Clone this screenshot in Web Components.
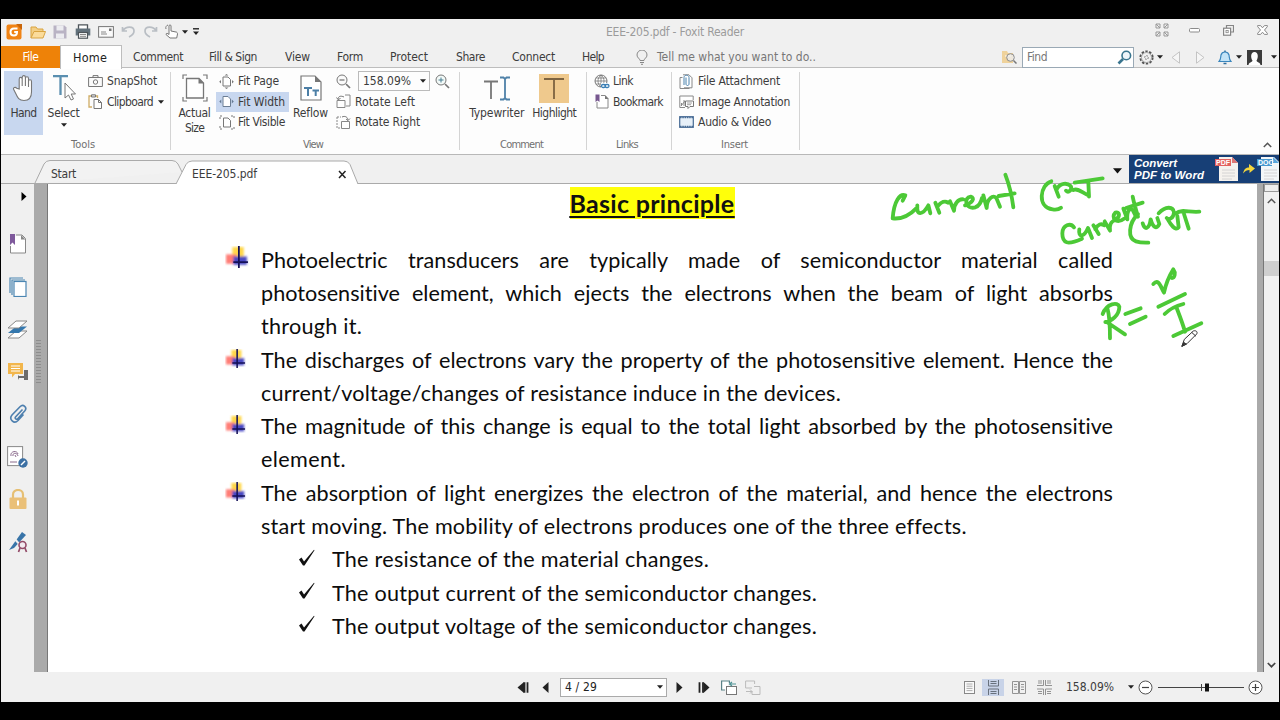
<!DOCTYPE html>
<html lang="en"><head><meta charset="utf-8"><title>EEE-205.pdf - Foxit Reader</title>
<style>
html,body{margin:0;height:100%;overflow:hidden;background:#000}
body{font-family:"DejaVu Sans Condensed","Noto Sans",sans-serif;font-size:12px;color:#3c3c3c}
</style></head><body><fx-app></fx-app>
<script>
const ICONS={
logo:[16,16,'<rect x=".5" y=".5" width="15" height="15" rx="2" fill="#f08314"/><path d="M10 0h6v6z" fill="#c9660a"/><path d="M11.5 4.5H8C5.5 4.5 4.5 6 4.500 8s1.300 3.500 3.500 3.500S11 10 11 8H8.200" fill="none" stroke="#fff" stroke-width="2"/>'],
folder:[16,14,'<path d="M1 13V2h5l1.500 2H13v3" fill="#f3cf86" stroke="#d9a441"/><path d="M1 13 4 6.500h11.500L13 13z" fill="#fbdc9b" stroke="#d9a441"/>'],
save:[14,14,'<path d="M.5.5h11l2 2v11H.5z" fill="#b9b3c4"/><path d="M3.500.5h7v5h-7zM3 8.500h8v5H3z" fill="#ececf0"/>'],
print:[16,15,'<path d="M3.500 5V.8h9V5" fill="#fff" stroke="#4d5459" stroke-width="1.300"/><rect x=".7" y="4.500" width="14.600" height="7" fill="#62717b"/><rect x="3.500" y="8.500" width="9" height="5.700" fill="#fff" stroke="#4d5459" stroke-width="1.200"/><path d="M5 10.500h6M5 12.300h6" stroke="#888"/>'],
mail:[16,12,'<rect x=".6" y=".6" width="14.800" height="10.600" fill="#fafafa" stroke="#777"/><path d="M3 6h5M3 8h6" stroke="#888"/><rect x="11" y="2.500" width="2.500" height="2.500" fill="#777"/>'],
undo:[15,13,'<path d="M1.500 2v4h4.500M2 5.500C5 1 13 1 13 6c0 3-3 5-5 6" fill="none" stroke="#b9bec4" stroke-width="1.700"/>'],
redo:[15,13,'<path d="M13.500 2v4H9M13 5.500C10 1 2 1 2 6c0 3 3 5 5 6" fill="none" stroke="#b9bec4" stroke-width="1.700"/>'],
touch:[14,15,'<path d="M4 10V2c0-1.500 2-1.500 2 0v5l5 1c1 0 1.500 1 1.500 2l-.8 4H5L1 10.500c0-1.500 1.500-1.500 3 0zM1 5a3 3 0 0 1 2-4" fill="#fff" stroke="#777"/>'],
down:[6,4,'<path d="M0 .3h6L3 3.700z" fill="#222"/>'],
downbig:[9,6,'<path d="M0 .3h9L4.500 5.500z" fill="#111"/>'],
custom:[6,8,'<path d="M0 .8h6" stroke="#222" stroke-width="1.400"/><path d="M0 3.500h6L3 7z" fill="#222"/>'],
full:[14,14,'<g fill="none" stroke="#999" stroke-width="1"><path d="M1 1h4v4H1zM9 1h4v4H9zM1 9h4v4H1zM9 9h4v4H9zM1 1l4 4M13 1 9 5M1 13l4-4M13 13 9 9"/></g>'],
min:[11,5,'<rect x=".5" y=".5" width="10" height="3.500" rx="1" fill="#fff" stroke="#8b8b8b"/>'],
restore:[11,11,'<path d="M3.500 3V.5h7v6.500H8" fill="none" stroke="#858585" stroke-width="1.200"/><rect x=".6" y="3.200" width="7" height="7" fill="#fff" stroke="#858585" stroke-width="1.200"/><rect x="3" y="5.500" width="2.200" height="2.200" fill="none" stroke="#858585" stroke-width=".8"/>'],
close:[11,10,'<path d="M.6.6h3L5.500 2.800 7.400.6h3v1L7.500 5l2.900 3.400v1h-3L5.500 7.200 3.600 9.400h-3v-1L3.500 5 .6 1.600z" fill="#fff" stroke="#888"/>'],
bulb:[12,15,'<path d="M4 10.500C4 8.500 1 8 1 5a5 5 0 0 1 10 0c0 3-3 3.500-3 5.500zM4 12.500h4M5 14.300h2" fill="none" stroke="#888"/>'],
fsearch:[16,14,'<path d="M1 13V1h5l1 2h5v10z" fill="#efd29b"/><path d="M4 6h6" stroke="#fff"/><circle cx="9.500" cy="7.500" r="3.800" fill="#eee" fill-opacity=".8" stroke="#8c8c8c"/><path d="m12.500 10.500 3 3" stroke="#777" stroke-width="1.500"/>'],
find:[15,15,'<circle cx="9.300" cy="5.500" r="4.300" fill="#edf5fa" stroke="#39758f" stroke-width="1.600"/><path d="M6 9 1.500 13.500" stroke="#39758f" stroke-width="2.600"/>'],
gear:[15,15,'<circle cx="7.500" cy="7.500" r="6.200" fill="none" stroke="#555" stroke-width="1.800" stroke-dasharray="2.400 1.500"/><circle cx="7.500" cy="7.500" r="5" fill="#f0f0f0" stroke="#777" stroke-width=".6"/><circle cx="7.500" cy="7.500" r="1.800" fill="none" stroke="#666" stroke-dasharray="1.500 1"/>'],
tl:[9,13,'<path d="M8.500.8v11.400L1 6.500z" fill="#f6f6f6" stroke="#c4c4c4"/>'],
tr:[9,13,'<path d="M.5.8v11.400L8 6.500z" fill="#f6f6f6" stroke="#c4c4c4"/>'],
bell:[14,15,'<path d="M1 11.500c2-2 1.500-4 2-6.500.5-2 2-3 4-3s3.500 1 4 3c.5 2.500 0 4.500 2 6.500z" fill="#c2e3f7" stroke="#3a86bd" stroke-width="1.200"/><path d="M7 2V.5M5.500 13.500h3" stroke="#2f6f9f" stroke-width="1.500"/>'],
avatar:[15,15,'<rect width="15" height="15" fill="#3b3b3b"/><path d="M1.500 15c.5-3 3.500-2.500 4-4.500C3.500 8 3.500 2 7.500 2s4 6 2 8.500c.5 2 3.500 1.500 4 4.500z" fill="#fff"/>'],
hand:[24,28,'<path d="M7.200 15V5.200c0-2.400 3-2.400 3 0V12 3.500c0-2.500 3.200-2.500 3.200 0V12 4.500c0-2.300 3.100-2.300 3.100 0V13 7.500c0-2.300 3-2.300 3 0V18c0 5-2 8.500-7.500 8.500-5 0-6.500-3-8-6.500L1.700 15.500c-1-2 1.800-3 3-1.200z" fill="#fff" stroke="#777" stroke-width="1.100"/>'],
select:[24,28,'<path d="M1 2.200h15M8.500 2v19" stroke="#5a8fb0" stroke-width="2.300"/><path d="M13 9v15l3.500-3 2.500 5 2.500-1-2.300-5H23.500z" fill="#fff" stroke="#777"/>'],
camera:[15,12,'<path d="M.6 2.500h13.800v9H.6zM5 2.500V.6h5v1.900" fill="#fafafa" stroke="#777"/><circle cx="7.500" cy="7" r="2.200" fill="none" stroke="#777"/>'],
clip:[15,15,'<path d="M4 2H1v11h3M9.500 4V2H8" fill="none" stroke="#d0ad65" stroke-width="1.300"/><path d="M3.500 3V.8h4V3z" fill="#ddd" stroke="#777"/><path d="M6 5.500h4.500l3 3v6H6zM10.500 5.500v3h3" fill="#fff" stroke="#777"/>'],
actual:[26,28,'<path d="M1 5V1h4M21 1h4v4M1 23v4h4M21 27h4v-4" fill="none" stroke="#777" stroke-width="1.200"/><path d="M4.500 4.500h12.500l4.500 4.500v15h-17z" fill="#fff" stroke="#777" stroke-width="1.300"/><path d="M16.500 4v5.500H22z" fill="#777"/>'],
fitpage:[15,15,'<path d="M4 3h5l2.500 2.500V12H4z" fill="#fff" stroke="#777"/><path d="M5.500 1.500 7.500 0l2 1.500zM5.500 13.500l2 1.500 2-1.500zM2 6 .2 7.800 2 9.500zM13 6l1.800 1.800L13 9.500z" fill="#777"/>'],
fitwidth:[15,13,'<path d="M4 1.500h5L11.500 4v7.500H4z" fill="#fff" stroke="#6c7e94"/><path d="M2.300 4.500.3 6.500l2 2zM12.800 4.500l2 2-2 2z" fill="#657992"/>'],
fitvis:[16,15,'<path d="M4.500 3H9l2.500 2.500V12h-7z" fill="#fff" stroke="#777"/><path d="M1 4V1h3M12 1h3v3M1 11v3h3M12 14h3v-3" fill="none" stroke="#777" stroke-dasharray="2 1"/>'],
reflow:[22,26,'<path d="M1 1h14l6 6v18H1z" fill="#fff" stroke="#777" stroke-width="1.200"/><path d="M15 1v6h6z" fill="#777"/><path d="M4 13h8M8 13v8M12.500 15.500h6.500M15.700 15.500V21" stroke="#4c7fa6" stroke-width="2"/>'],
zin:[15,15,'<circle cx="6" cy="6" r="5" fill="#f3faf8" stroke="#777"/><path d="m10 10 4 4" stroke="#777" stroke-width="1.700"/><path d="M3.500 6h5M6 3.500v5" stroke="#477c91"/>'],
zout:[15,15,'<circle cx="6" cy="6" r="5" fill="#fafafa" stroke="#777"/><path d="m10 10 4 4" stroke="#777" stroke-width="1.700"/><path d="M3.500 6h5" stroke="#555"/>'],
rotl:[15,15,'<path d="M9 1h5v11h-4" fill="none" stroke="#888"/><path d="M1 6.500h8v7H1z" fill="#fff" stroke="#888"/><path d="M2 5.500C2 2 5 1.500 8 3M2 5.500.5 3.500M2 5.500l2.500-1" fill="none" stroke="#777"/>'],
rotr:[15,15,'<path d="M1 2v11h3M1 2h4" fill="none" stroke="#888" stroke-dasharray="2 1"/><path d="M5.500 6.500h8v7h-8z" fill="#fff" stroke="#888"/><path d="M6 2c3-1.500 6 0 6 3.500M12 5.500 10 4M12 5.500 14 3.500" fill="none" stroke="#777"/>'],
type:[28,25,'<path d="M1 5.500h14M8 5.500V23" stroke="#777" stroke-width="1.800"/><path d="M17 1.500h3.500L22 3l1.500-1.500H27M17 23.500h3.500L22 22l1.500 1.500H27M22 3v19" fill="none" stroke="#4f81a8" stroke-width="1.800"/>'],
high:[30,29,'<rect width="30" height="29" fill="#efc98d"/><path d="M5 5h20M15 5v20" stroke="#7d6340" stroke-width="1.800"/>'],
link:[16,15,'<circle cx="7" cy="7" r="6" fill="#fff" stroke="#777"/><path d="M1 7h12M7 1v12M2 4h10M2 10h9M7 1C3 4 3 10 7 13M7 1c4 3 4 9 0 12" fill="none" stroke="#777" stroke-width=".8"/><path d="M7 9h9v6H7z" fill="#fff"/><rect x="7.500" y="10.500" width="4" height="3" rx="1.500" fill="none" stroke="#3b7fb5" stroke-width="1.300"/><rect x="11" y="10.500" width="4" height="3" rx="1.500" fill="none" stroke="#3b7fb5" stroke-width="1.300"/>'],
bm:[15,15,'<path d="M7 1.500h4l3 3V14H3V8" fill="#fff" stroke="#888"/><path d="M11 1v4h3.500z" fill="#777"/><path d="M1.500.5h4V8l-2-1.500-2 1.500z" fill="#77588f"/>'],
attach:[14,15,'<path d="M3.500 3.500H1v11h9.500" fill="none" stroke="#888"/><path d="M4 .8h6l3 3v10H5" fill="#fff" stroke="#888"/><path d="M7 3.500v6.500c0 2 3 2 3 0V3.500c0-3-5-3-5 0V11" fill="none" stroke="#4b83ae"/>'],
imgann:[15,14,'<path d="M6 12.500H.8V1h13.400v4" fill="#fff" stroke="#888"/><path d="M2.500 11V8M5 11V5M2 11l4-5" stroke="#888"/><path d="M6.500 6h8v5.500H11L9 13.500v-2H6.500z" fill="#fff" stroke="#777"/><path d="M8 8h5M8 9.700h4" stroke="#888" stroke-width=".8"/>'],
video:[15,12,'<rect x=".7" y=".7" width="13.600" height="10.600" fill="#e7f0f8" stroke="#476b94" stroke-width="1.200"/><path d="M1 1.500h13M1 10.500h13" stroke="#476b94" stroke-width="1.600" stroke-dasharray="1.500 .8"/>'],
up:[9,6,'<path d="M.8 5 4.500 1.300 8.200 5" fill="none" stroke="#555" stroke-width="1.500"/>'],
dn:[9,6,'<path d="M.8 1 4.500 4.700 8.200 1" fill="none" stroke="#444" stroke-width="1.700"/>'],
x:[9,9,'<path d="m1 1 6.500 7M7.500 1 1 8" stroke="#222" stroke-width="1.500"/>'],
play:[6,9,'<path d="M.5 0v9L5.500 4.500z" fill="#000"/>'],
sbm:[16,20,'<path d="M6 1h6l3.500 3.500V19H.5V12" fill="#fff" stroke="#888"/><path d="M11 1v4.500h4.500z" fill="#888"/><path d="M0 0h5v11L2.500 8.500 0 11z" fill="#7f5a9c"/>'],
pages:[18,20,'<path d="M1 16V1h13M3 18V3h13" fill="none" stroke="#4b86b2" stroke-width="1.200"/><rect x="5" y="4.500" width="12" height="15" fill="#fff" stroke="#4b86b2" stroke-width="1.200"/>'],
layers:[21,19,'<path d="M1 18h11l8-7H9z" fill="#fff" stroke="#888"/><path d="M1 13h11l8-6.500H9z" fill="#3477ad"/><path d="M1 8h11l8-7H9z" fill="#fff" stroke="#888"/>'],
comm:[20,20,'<path d="M0 1h15v11H7l-3 3.500V12H0z" fill="#f2b64c"/><path d="M3 4h9M3 6.500h9M3 9h9" stroke="#fff"/><path d="M16 8h4v10h-4v-2h-5l-1 2v-5l1 1h5z" fill="#6c6c6c"/>'],
pclip:[18,20,'<path d="M13.500 5.500 6.500 13c-1 1.500 1 3 2.200 1.700l7-7.700c3-3.500-1.500-7.500-4.700-4.200L3 11c-3.500 4.200 2 9.500 6 5.500l5.500-6" fill="none" stroke="#4d7fae" stroke-width="1.600"/>'],
sign:[21,22,'<rect x=".6" y=".6" width="15" height="19" fill="#fff" stroke="#888"/><path d="M4 10c-1-5 6-6 7-2M6 10c-1-3 4-4 5 0M8 9l1 2M3 16h7" fill="none" stroke="#8a6a8c"/><circle cx="16" cy="17" r="4.700" fill="#3c70a4"/><path d="m14 19 4-4" stroke="#fff" stroke-width="1.500"/>'],
lock:[18,20,'<path d="M4 9V5.500c0-6 10-6 10 0V9" fill="none" stroke="#e6bf73" stroke-width="2.200"/><rect x=".5" y="8.500" width="17" height="11.500" rx="1" fill="#eac078"/><path d="M9 11.500v5" stroke="#fff" stroke-width="2"/>'],
pen:[20,22,'<path d="M1 19 14 1l4 3L6 17z" fill="#3874a8"/><path d="m6 7 6 7" stroke="#f0f0f0" stroke-width="2"/><circle cx="14.500" cy="14" r="3.500" fill="#f2eaf0" stroke="#934b68" stroke-width="1.600"/><path d="m12 17-1.500 4M17 17l1.500 4" stroke="#934b68" stroke-width="1.700"/>'],
first:[12,11,'<path d="M7 0v11L.5 5.500z" fill="#222"/><path d="M7.500.3v10.400M10.500.3v10.400" stroke="#222" stroke-width="1.800"/>'],
prev:[7,11,'<path d="M6.500 0v11L.5 5.500z" fill="#222"/>'],
next:[7,11,'<path d="M.5 0v11l6-5.500z" fill="#222"/>'],
last:[12,11,'<path d="M5.500 0v11l6-5.500z" fill="#222"/><path d="M1.500.3v10.400M5 .3v10.400" stroke="#222" stroke-width="1.800"/>'],
vb:[16,15,'<path d="M4 10H.6V1h7.800v2" fill="#fff" stroke="#5b8388" stroke-width="1.200"/><rect x="5.500" y="6.500" width="10" height="8" fill="#fff" stroke="#777"/><path d="M15 4H9M11 2 8.500 4 11 6" fill="none" stroke="#4d9395" stroke-width="1.200"/>'],
vf:[16,15,'<path d="M7 8H.6V1h9v3" fill="none" stroke="#bbb"/><path d="M9 6.500h6v8H7V11M1 11.500h6M5 9.500l2 2-2 2" fill="none" stroke="#bbb"/>'],
p1:[11,13,'<rect x=".5" y=".5" width="10" height="12" fill="#fafafa" stroke="#888"/><path d="M2.500 3h6M2.500 5.200h6M2.500 7.400h6M2.500 9.600h6" stroke="#999" stroke-width=".8"/>'],
p2:[11,15,'<path d="M.5 0v6h10V0M.5 15V9h10v6M2.500 1.500h6M2.500 3.500h6M2.500 11.500h6M2.500 13.500h6" fill="none" stroke="#68717d"/>'],
p3:[14,13,'<path d="M.5.5h6v12h-6zM7.500.5h6v12h-6zM2 3.500h3M2 6h3M2 8.500h3M9 3.500h3M9 6h3M9 8.500h3" fill="none" stroke="#888" stroke-width=".9"/>'],
p4:[15,15,'<path d="M0 5.500h6.500V0M15 5.500H8.500V0M0 9h6.500v6M15 9H8.500v6M1 1h4M1 3h4M10 1h4M10 3h4M1 11.500h4M1 13.500h4M10 11.500h4M10 13.500h4" fill="none" stroke="#888" stroke-width=".9"/>'],
zm:[15,15,'<circle cx="7.500" cy="7.500" r="6.500" fill="#fff" stroke="#555"/><path d="M4 7.500h7" stroke="#444" stroke-width="1.200"/>'],
zp:[15,15,'<circle cx="7.500" cy="7.500" r="6.500" fill="#fff" stroke="#555"/><path d="M4 7.500h7M7.500 4v7" stroke="#444" stroke-width="1.200"/>'],
slider:[86,10,'<path d="M0 5.500h86" stroke="#444" stroke-width="1.200"/><path d="M43.500 2v7" stroke="#444"/><rect x="47" y="1.500" width="4" height="8" fill="#111"/>'],
pdf:[24,25,'<path d="M4 1h13l6 6v18H4z" fill="#f5f2ee"/><path d="M17 1v6h6z" fill="#dd7776"/><path d="M7 14h13M7 17h13M7 20h13M7 23h10" stroke="#ccc" stroke-width=".8"/><rect y="3" width="16" height="7" fill="#e2605e"/>'],
doc:[22,25,'<path d="M4 1h13l6 6v18H4z" fill="#f3f6f8"/><path d="M16 1v6h6z" fill="#5aa7dc"/><path d="M7 14h13M7 17h13M7 20h13M7 23h10" stroke="#ccc" stroke-width=".8"/><rect y="3" width="15" height="7" fill="#4798cf"/>'],
arrow:[12,10,'<path d="M0 9.500C1 5 3 3.500 6 3.500V0l6 4.500L6.500 9V6C4 6 2 7 0 9.500z" fill="#f3d63d"/>'],
tick:[17,18,'<path d="M1 10.500 3.500 8.500 6 12.500 16 .8 16.500 1.300 6.500 16.500H5z" fill="#111"/>'],
};
const def=(n,html,cb)=>customElements.define(n,class extends HTMLElement{
 connectedCallback(){ if(this.shadowRoot)return; this.attachShadow({mode:'open'}).innerHTML=typeof html==='function'?html(this):html; if(cb)cb(this); }});
const I=(n,s='')=>`<fx-icon name="${n}" style="${s}"></fx-icon>`;
const T=(t,w,s='')=>`<fx-text w="${w}" style="${s}">${t}</fx-text>`;

def('fx-app',`<style>:host{display:grid;grid-template-rows:26px 23px 87px 29px 488px 30px;width:1278px;margin:19px 0 0 1px;background:#f0f0f0;height:683px}</style>
<fx-titlebar></fx-titlebar><fx-menubar></fx-menubar><fx-ribbon></fx-ribbon><fx-doctabs></fx-doctabs><fx-workspace></fx-workspace><fx-statusbar></fx-statusbar>`);

def('fx-titlebar',`<style>:host{display:grid;align-items:center;height:25px;grid-template-columns:5px 24px 23px 22px 23px 23px 22px 22px 17px 11px 413px 549px 34px 34px 34px 18px;color:#9b9b9b}</style>
<i></i>${['logo','folder','save','print','mail','undo','redo','touch','down','custom'].map(n=>I(n)).join('')}
${T('EEE-205.pdf - Foxit Reader',138,'font-size:12px')}${I('full','margin-top:-4px')}${I('min','margin-top:-3px')}${I('restore','margin-top:-3px')}${I('close','margin-top:-3px')}`);

def('fx-menubar',`<style>:host{display:grid;grid-template-columns:59px 62px 11px 76px 76px 52px 53px 66px 56px 70px 54px 21px 344px 21px 117px 18px 14px 25px 22px 18px 11px 24px 8px;align-items:center;height:22px;border-bottom:1px solid #bdbdbd}
.file,.home{height:22px;display:grid;place-items:center;box-sizing:border-box}
.file{background:#ee8208;color:#fff}.home{background:#fff;border:1px solid #bdbdbd;border-bottom:0;height:24px;align-self:start;color:#222;z-index:1;padding-right:2px}
.find{box-sizing:border-box;width:112px;height:21px;border:1px solid #9aa9b5;background:#fff;display:flex;align-items:center;justify-content:space-between;padding:0 1px 0 4px;color:#777}</style>
<span class="file">${T('File',16)}</span><span class="home">${T('Home',34,'font-size:12.5px')}</span><i></i>
${T('Comment',50)}${T('Fill &amp; Sign',48)}${T('View',25)}${T('Form',26)}${T('Protect',38)}${T('Share',29)}${T('Connect',43)}${T('Help',22)}${I('bulb')}${T('Tell me what you want to do..',159,'color:#777')}
${I('fsearch')}<span class="find">${T('Find',20)}${I('find')}</span>${I('gear')}${I('down')}${I('tl')}${I('tr')}${I('bell')}${I('down')}${I('avatar')}${I('down')}`);

def('fx-group',e=>`<style>:host{display:grid;grid-template-rows:65px 1fr;box-sizing:border-box;position:relative;width:${e.getAttribute('width')}px;padding-top:3px}
:host::after{content:"";position:absolute;right:0;top:4px;height:78px;width:1px;background:#d4d4d4}
.c{display:flex;min-width:0}.l{justify-self:center;align-self:start;margin-top:2px;color:#707070}</style><div class="c"><slot></slot></div><div class="l">${T(e.getAttribute('label'),e.getAttribute('lw'),'font-size:11px')}</div>`);
def('fx-big',e=>`<style>:host{display:flex;flex-direction:column;align-items:center;box-sizing:border-box;height:64px}
:host([active]){background:#c8d7ef}.i{height:34px;display:grid;place-items:center}.t{height:15px;display:grid;place-items:center}</style>
<div class="i">${I(e.getAttribute('icon'))}</div>${e.getAttribute('label').split('|').map((t,i)=>`<div class="t">${T(t,e.getAttribute('lw').split('|')[i])}</div>`).join('')}<slot></slot>`);
def('fx-item',e=>`<style>:host{display:grid;grid-template-columns:19px auto auto;justify-content:start;align-items:center;height:20.5px;padding-left:3px}
:host([active]){background:#c8d7ef}slot{display:block;margin-left:5px}</style>${I(e.getAttribute('icon'))}${T(e.getAttribute('label'),e.getAttribute('lw'))}<slot></slot>`);
def('fx-ribbon',`<style>:host{display:flex;height:86px;background:#fdfdfd;border-bottom:1px solid #b8b8b8;position:relative}
.combo{display:flex;align-items:center;height:20.5px;padding-left:3px}.box{box-sizing:border-box;width:72px;height:20px;border:1px solid #bbb;margin:0 5px 0 7px;display:flex;align-items:center;justify-content:space-between;padding:0 3px 0 4px}
.up{position:absolute;right:7px;bottom:6px}</style>
<fx-group width="170" label="Tools" lw="24" style="padding-right:6px"><fx-big active icon="hand" label="Hand" lw="26" style="width:39px;margin-left:3px"></fx-big>
<fx-big icon="select" label="Select" lw="32" style="width:41px">${I('down','margin-top:3px')}</fx-big>
<div style="padding-left:1px"><fx-item icon="camera" label="SnapShot" lw="50"></fx-item><fx-item icon="clip" label="Clipboard" lw="46">${I('down')}</fx-item></div></fx-group>
<fx-group width="289" label="View" lw="20" style="padding-right:5px"><fx-big icon="actual" label="Actual|Size" lw="32|19" style="width:45px;margin-left:1px"></fx-big>
<div style="width:73px;margin-left:-1px"><fx-item icon="fitpage" label="Fit Page" lw="41"></fx-item><fx-item active icon="fitwidth" label="Fit Width" lw="47"></fx-item><fx-item icon="fitvis" label="Fit Visible" lw="47"></fx-item></div>
<fx-big icon="reflow" label="Reflow" lw="35" style="width:43px"></fx-big>
<div style="margin-left:1px"><div class="combo">${I('zout')}<span class="box">${T('158.09%',48)}${I('down')}</span>${I('zin')}</div><fx-item icon="rotl" label="Rotate Left" lw="60"></fx-item><fx-item icon="rotr" label="Rotate Right" lw="65"></fx-item></div></fx-group>
<fx-group width="127" label="Comment" lw="43" style="padding-right:4px"><fx-big icon="type" label="Typewriter" lw="55" style="width:58px;margin-left:8px"></fx-big><fx-big icon="high" label="Highlight" lw="44" style="width:58px"></fx-big></fx-group>
<fx-group width="85" label="Links" lw="22" style="padding-right:5px"><div style="margin-left:4px"><fx-item icon="link" label="Link" lw="20"></fx-item><fx-item icon="bm" label="Bookmark" lw="50"></fx-item></div></fx-group>
<fx-group width="128" label="Insert" lw="27" style="padding-right:3px"><div style="margin-left:4px"><fx-item icon="attach" label="File Attachment" lw="82"></fx-item><fx-item icon="imgann" label="Image Annotation" lw="92"></fx-item><fx-item icon="video" label="Audio &amp; Video" lw="73"></fx-item></div></fx-group>
<div class="up">${I('up')}</div>`);

def('fx-doctabs',`<style>:host{display:flex;align-items:flex-end;height:29px;box-sizing:border-box;border-bottom:1px solid #aaa;background:#f0f0f0}
.tab{display:grid;grid-template:"a" 23px / 1fr;height:23px;flex:none}.tab>*{grid-area:a}.tab svg{display:block;overflow:visible}.lab{display:flex;align-items:center;justify-content:space-between;padding-top:4px}
.end{margin-left:auto;display:flex;align-items:center;height:29px;gap:7px;flex:none}
.ad{display:flex;align-items:center;width:150px;height:29px;box-sizing:border-box;background:#173f76;color:#fff;padding-left:5px;overflow:hidden;flex:none;font:italic bold 11.500px/12px "Liberation Sans",Arial,sans-serif}
.ad div{width:81px;flex:none}.b{display:grid;grid-template-areas:"a";color:#fff;flex:none}.b>*{grid-area:a}.b span{font:bold 7px/7px "Liberation Sans",sans-serif;padding:3px 0 0 1px}</style>
<div class="tab" style="width:141px;margin-left:34px"><svg width="148" height="23"><path d="M0 23 9 4Q11 .5 15 .5H137Q141 .5 143 4L147 12" fill="#f2f2f2" stroke="#aaa"/></svg><div class="lab" style="padding-left:16px">${T('Start',25)}</div></div>
<div class="tab" style="width:182px;z-index:1;margin-bottom:-1px;height:24px;position:relative"><svg width="182" height="24"><path d="M0 24 10 4.500Q12 1 16 1H168Q172 1 174 4.500L182 24" fill="#fff" stroke="#aaa"/></svg><div class="lab" style="padding:5px 11px 0 16px">${T('EEE-205.pdf',65)}${I('x')}</div></div>
<div class="end">${I('downbig','margin-top:4px')}<div class="ad"><div>${T('Convert',43)}${T('PDF to Word',70)}</div><span class="b">${I('pdf')}<span>PDF</span></span>${I('arrow','margin:0 2px 0 4px')}<span class="b">${I('doc')}<span>DOC</span></span></div></div>`);

def('fx-workspace',`<style>:host{display:grid;grid-template-columns:33px 14px 1209px 7px 15px;height:488px}
.side{display:grid;grid-template-rows:24px repeat(8,42.500px);justify-items:center;align-items:center;align-content:start}
.gut{background:#aaa;border-right:1px solid #777;box-sizing:border-box;display:flex;align-items:center}.grip{width:5px;height:44px;margin:-132px 0 0 2px;background:repeating-linear-gradient(#8d8d8d 0 1px,#aaa 1px 3px)}
.sb{background:#f1f1f1;display:grid;grid-template-rows:8px 18px 51px 15px 1fr 12px;justify-items:center;align-items:center}
.cap{width:13px;height:6px;border:1px solid #999;background:#eee}.th{width:15px;height:15px;background:#cfcfcf}</style>
<div class="side">${I('play','margin-left:12px')}${['sbm','pages','layers','comm','pclip','sign','lock','pen'].map(n=>I(n,'margin-top:30px')).join('')}</div>
<div class="gut"><div class="grip"></div></div><fx-page></fx-page><div class="gut"></div>
<div class="sb"><div class="cap"></div>${I('up')}<i></i><div class="th"></div><i></i>${I('dn','margin-top:-3px')}</div>`);

def('fx-bullet',`<style>:host{display:block;width:21px;height:20px}:host([large]){width:24px;height:23px}svg{display:block;width:100%;height:100%}</style><svg viewBox="0 0 23 22"><defs><filter id="s"><feGaussianBlur stdDeviation="1"/></filter></defs><g filter="url(#s)"><rect x="7" y="1" width="11" height="10" fill="#ffd749"/><rect x="1" y="8" width="10" height="9" fill="#ff7d76"/><rect x="8" y="10" width="13" height="8" fill="#4a48c4"/></g><path d="M13.300 0v21M8 15.500h14" stroke="#141058" stroke-width="1.700"/></svg>`);
const L=(t,w)=>`<fx-text class="ln" w="${w||852}" ${w?'':'justify'}>${t}</fx-text>`;
def('fx-page',`<style>:host{display:block;position:relative;background:#fff;color:#0c0c0c;font:21.600px/33.300px Lato,sans-serif;height:488px;overflow:visible}
h1{margin:0;padding-top:3px;display:flex;justify-content:center;font-size:25px;line-height:32px;height:32px}
mark{background:#ffff0a;color:#111;height:32px;width:165px;margin-right:1px;text-decoration:underline;text-decoration-thickness:2px;text-underline-offset:3px}
.body{padding:24.700px 0 0 177px}.r{display:grid;grid-template-columns:36px 852px}.r fx-bullet{margin-top:5px}.r fx-bullet[large]{margin-top:2px}.ln{height:33.300px;line-height:33.300px}
.s{display:grid;grid-template-columns:34px auto;padding-left:73px;height:33.300px;align-items:center;justify-content:start}
.ink{position:absolute;left:832px;top:-14px;z-index:3;overflow:visible}</style>
<h1><mark><fx-text w="165" style="font-weight:bold;text-decoration:inherit">Basic principle</fx-text></mark></h1><div class="body">
<div class="r"><fx-bullet large></fx-bullet><div>${L('Photoelectric transducers are typically made of semiconductor material called')}${L('photosensitive element, which ejects the electrons when the beam of light absorbs')}${L('through it.',101)}</div></div>
<div class="r"><fx-bullet></fx-bullet><div>${L('The discharges of electrons vary the property of the photosensitive element. Hence the')}${L('current/voltage/changes of resistance induce in the devices.',580)}</div></div>
<div class="r"><fx-bullet></fx-bullet><div>${L('The magnitude of this change is equal to the total light absorbed by the photosensitive')}${L('element.',85)}</div></div>
<div class="r"><fx-bullet></fx-bullet><div>${L('The absorption of light energizes the electron of the material, and hence the electrons')}${L('start moving. The mobility of electrons produces one of the three effects.',705)}</div></div>
${[['resistance of the material',377],['output current of the semiconductor',485],['output voltage of the semiconductor',485]].map(([t,w])=>`<div class="s">${I('tick','margin-top:-5px')}${L(`The ${t} changes.`,w)}</div>`).join('')}</div>
<svg class="ink" width="330" height="190" viewBox="0 0 990 570" fill="none" stroke="#4cc936" stroke-width="11.500" stroke-linecap="round" stroke-linejoin="round">
<path d="M68 92 76 76C60 70 42 92 38 145C62 148 90 135 112 112M112 106C108 138 128 136 145 106L151 130M166 98 178 128M172 110C184 94 196 92 204 98M210 94 222 122C222 102 235 86 250 88M255 106C278 98 286 84 272 80C250 82 256 120 286 112C300 106 304 94 306 84M310 76 320 114C320 88 340 70 350 86L360 110M376 14C386 40 396 80 400 112M356 78 404 70"/>
<path d="M514 34C480 44 470 112 518 118C530 120 538 117 543 113M524 48 536 80M530 58C540 38 562 38 572 48C578 58 566 70 558 62M584 38 668 25M625 36 627 80M580 60C594 54 604 66 625 76"/>
<path d="M582 172C572 158 548 164 547 190C547 220 562 226 606 206M598 178C594 204 612 202 624 174L636 204M640 166 656 192M646 178C654 162 664 160 672 166M674 154 690 182C688 168 692 154 706 150M704 150C722 142 720 124 706 128C692 142 708 164 732 146M730 116 742 148C740 122 750 112 758 120L768 140M758 80C762 100 768 120 774 140M738 114 788 98M774 132C745 160 742 205 768 214C782 219 794 218 805 218"/>
<path d="M788 160C794 182 808 178 812 148C818 172 830 180 838 162L832 144M836 130C856 108 880 108 882 128C880 146 866 150 860 144M862 146C872 164 886 184 896 172L892 138M888 130C906 116 926 128 958 125M912 132 926 176"/>
<path d="M682 414C690 442 690 480 690 505M668 432C680 400 714 394 718 410C718 436 694 454 676 456M680 456 735 493M736 432 782 415M750 462 797 440M820 342C836 324 842 350 852 368C858 340 870 314 880 298C888 308 884 324 876 324M835 410 915 372M854 432C870 416 894 406 910 402M890 414C900 440 908 460 915 485M880 498 964 460"/>
<g stroke="#333" stroke-width="3" fill="#fff"><path d="M906 528 913 508 940 483C948 480 954 486 950 492L922 520Z"/><path d="m936 488 11 10M906 528l5-11 7 5z" fill="#333"/></g></svg>`);

def('fx-statusbar',`<style>:host{display:grid;align-items:center;height:30px;background:#f0f0f0;grid-template-columns:516px 25px 18px 116px 22px 23px 24px 219px 18px 30px 25px 29px 62px 10px 20px 90px 15px}
.pg{box-sizing:border-box;width:107px;height:19px;border:1px solid #aaa;background:#fff;display:flex;align-items:center;justify-content:space-between;padding:0 3px 0 4px;color:#222}.on{background:#c8d3e8;width:22px;height:17px;display:grid;place-items:center}</style>
<i></i>${I('first')}${I('prev')}<span class="pg">${T('4 / 29',32)}${I('down')}</span>${I('next')}${I('last')}${I('vb')}${I('vf')}${I('p1')}<span class="on">${I('p2')}</span>${I('p3')}${I('p4')}${T('158.09%',48)}${I('down')}${I('zm')}${I('slider')}${I('zp')}`);

def('fx-icon',e=>{const[w,h,s]=ICONS[e.getAttribute('name')];return `<style>:host{display:block;width:${w}px;height:${h}px;flex:none}svg{display:block}</style><svg width="${w}" height="${h}" viewBox="0 0 ${w} ${h}">${s}</svg>`});
/* Single line of text, tracked so that it spans the width in its w attribute. */
def('fx-text',e=>`<style>:host{display:block;white-space:nowrap;width:${e.getAttribute('w')}px}:host([justify]){text-align-last:justify;letter-spacing:.03px;white-space:normal}</style><slot></slot>`,e=>{
 if(e.hasAttribute('justify'))return;
 const r=document.createRange();r.selectNodeContents(e);const n=r.getBoundingClientRect().width,w=+e.getAttribute('w');
 if(n>0)e.style.letterSpacing=((w-n)/e.textContent.length).toFixed(3)+'px';
});
</script></body></html>
